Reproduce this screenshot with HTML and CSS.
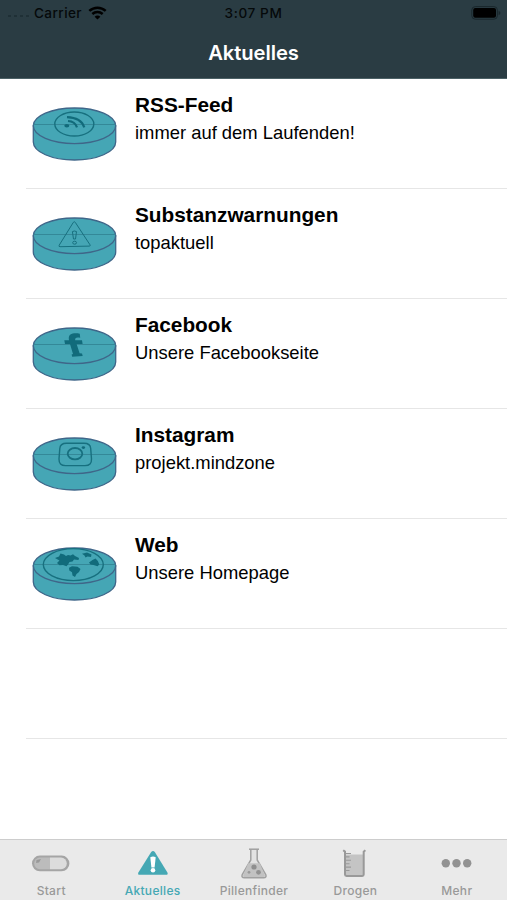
FILE: index.html
```
<!DOCTYPE html>
<html lang="de">
<head>
    <meta charset="UTF-8">
    <meta name="viewport" content="width=device-width, initial-scale=1.0">
    <title>Aktuelles</title>
    <link rel="stylesheet" href="styles.css">
</head>
<body>
    <svg class="defs" width="0" height="0">
        <symbol id="pill" viewBox="0 0 86 56">
            <path class="body" d="M1.3 20V36C1.3 46 19.7 54 42.5 54S83.7 46 83.7 36V20Z"/>
            <ellipse class="body" cx="42.5" cy="19.8" rx="41.2" ry="17.8"/>
            <path class="notch" d="M1.5 18.5H83.5"/>
        </symbol>
    </svg>
    <div id="header">
        <div class="status">
            <div class="carrier">
                <span class="signal"><i></i><i></i><i></i><i></i></span>
                <span>Carrier</span>
                <svg class="wifi" width="19" height="14" viewBox="0 0 19 14">
                    <path d="M1.3 4.9C6 .6 13 .6 17.7 4.9M4.3 8C7.3 5.3 11.7 5.3 14.7 8"/>
                    <path class="dot" d="M9.5 13.6L6.6 10.7C8.2 9.2 10.8 9.2 12.4 10.7Z"/>
                </svg>
            </div>
            <div class="time">3:07 PM</div>
            <div class="power">
                <svg width="30" height="14" viewBox="0 0 30 14">
                    <rect class="case" x=".8" y=".6" width="25.6" height="12.6" rx="3.5"/>
                    <rect x="2.2" y="2" width="22.8" height="9.8" rx="2"/>
                    <path class="tip" d="M27.6 4.7Q29.4 5.4 29.4 7T27.6 9.3Z"/>
                </svg>
            </div>
        </div>
        <h1>Aktuelles</h1>
    </div>
    <div id="list">
        <div class="row">
            <svg class="icon" viewBox="0 0 86 56">
                <use href="#pill"/>
                <ellipse class="line" cx="42.3" cy="18" rx="19.5" ry="12"/>
                <ellipse class="fill" cx="34.8" cy="19.7" rx="2.5" ry="1.8"/>
                <path class="wave" d="M36 15Q43 15.3 45 21.4M35 11.2Q49 11.7 52.3 21.4"/>
            </svg>
            <div class="text">
                <h2>RSS-Feed</h2>
                <p>immer auf dem Laufenden!</p>
            </div>
        </div>
        <div class="row">
            <svg class="icon" viewBox="0 0 86 56">
                <use href="#pill"/>
                <path class="line thin" d="M41.3 6.4Q42.3 5 43.3 6.4L58 28.8Q58.8 30 57.3 30.1L28 30.7Q26.4 30.7 27.2 29.2Z"/>
                <path class="line thin" d="M40.4 15.6Q42.4 14.4 44.5 15.6L43.5 23H41.5Z"/>
                <ellipse class="line thin" cx="42.6" cy="26.7" rx="1.9" ry="1.5"/>
            </svg>
            <div class="text">
                <h2>Substanzwarnungen</h2>
                <p>topaktuell</p>
            </div>
        </div>
        <div class="row">
            <svg class="icon" viewBox="0 0 86 56">
                <use href="#pill"/>
                <path class="fill" d="M47.8 7.7C40.5 6.6 36.5 8.2 36.8 12.8L37 14.3H32.3L33 18H38L41 28L39.6 28.6L40.2 30.8L50.7 30L50 27.4L47.6 27.2L44.6 18H50.6L50 14.3H43.2C42.8 11.6 44.5 11.1 48.2 11.8Z"/>
            </svg>
            <div class="text">
                <h2>Facebook</h2>
                <p>Unsere Facebookseite</p>
            </div>
        </div>
        <div class="row">
            <svg class="icon" viewBox="0 0 86 56">
                <use href="#pill"/>
                <path class="line" d="M34.5 7.2H52Q58.4 7.2 58.7 12.5L59.5 23Q59.8 29.6 53 29.6H33.5Q26.8 29.6 27 23L27.8 12.5Q28.2 7.2 34.5 7.2Z"/>
                <ellipse class="line bold" cx="43" cy="17.7" rx="7.3" ry="5.7"/>
                <ellipse class="fill" cx="51.4" cy="11.6" rx="1.7" ry="1.4"/>
            </svg>
            <div class="text">
                <h2>Instagram</h2>
                <p>projekt.mindzone</p>
            </div>
        </div>
        <div class="row">
            <svg class="icon" viewBox="0 0 86 56">
                <use href="#pill"/>
                <ellipse class="line" cx="41.3" cy="18.6" rx="30" ry="16"/>
                <path class="fill" d="M23 12L27 10.5L28.5 7.5L32 8.5L34 10L36 9L38.5 9.5L41 8.3L43 10L47 12L46.5 14L42 13.5L40.5 15.5L37.5 16L36 18.5L34.5 20.3L31 19L27.5 19.3L25 17L27.5 14.5Z"/>
                <path class="fill" d="M50 7.7L55 6.5L59.5 8.5L59 11L55.5 10.5L53.5 11.5L52.5 9.5Z"/>
                <path class="fill" d="M57 16.5L60.5 14L63.5 12.6Q66.7 15 67.3 18.6L65.5 20.3L61.5 19L58.5 18.5Z"/>
                <path class="fill" d="M37 21.7L40 20.2L45.5 20.8L48.5 23L47 26L44.5 28L43 31L40.5 29.5L40 26.3L37.3 24.5Z"/>
            </svg>
            <div class="text">
                <h2>Web</h2>
                <p>Unsere Homepage</p>
            </div>
        </div>
        <div class="row"></div>
    </div>
    <div id="tabs">
        <div class="tab">
            <svg width="40" height="32" viewBox="0 0 40 32">
                <rect x="1" y="7.6" width="37.4" height="15.6" rx="7.8" fill="#a5a5a5"/>
                <path d="M19 9.6H9A5.8 5.8 0 0 0 9 21.2H19Z" fill="#bcbcbc"/>
                <path d="M19 9.6H30A5.8 5.8 0 0 1 30 21.2H19Z" fill="#dcdcdc"/>
                <path d="M5.5 12L10 11L8 14.5L5 15Z" fill="#999"/>
            </svg>
            <span>Start</span>
        </div>
        <div class="tab active">
            <svg width="40" height="32" viewBox="0 0 40 32">
                <path d="M18.2 4Q20 1.8 21.8 4L34.4 24.4Q35.4 26.7 33 26.7H6.6Q4.4 26.7 5.4 24.4Z" fill="#45a8b4"/>
                <path d="M17.3 9.2Q20 7.6 22.7 9.2L21.6 19.4H18.4Z" fill="#fff"/>
                <circle cx="20" cy="22.3" r="2.3" fill="#fff"/>
            </svg>
            <span>Aktuelles</span>
        </div>
        <div class="tab">
            <svg width="40" height="32" viewBox="0 0 40 32">
                <path d="M16.8 1.3V12L8.4 26.3Q7 29.8 10.4 29.8H29.6Q33 29.8 31.6 26.3L23.2 12V1.3" fill="#e2e2e2" stroke="#a0a0a0" stroke-width="1.5"/>
                <path d="M14.2 15.2H25.8L30.6 26.4Q31.5 28.9 29.4 28.9H10.6Q8.5 28.9 9.4 26.4Z" fill="#c2c2c2"/>
                <path d="M15 1.2H25" stroke="#a0a0a0" stroke-width="1.5"/>
                <circle cx="20" cy="19" r="2.6" fill="#8e8e8e"/>
                <circle cx="24.5" cy="24.3" r="2.4" fill="#929292"/>
                <circle cx="15" cy="24.3" r="1.4" fill="#999"/>
            </svg>
            <span>Pillenfinder</span>
        </div>
        <div class="tab">
            <svg width="40" height="32" viewBox="0 0 40 32">
                <path d="M10 6.5H29V27H10Z" fill="#c4c4c4"/>
                <path d="M8.2 2.2L10 3.6V26.6Q10 28 11.5 28H27.2Q28.7 28 28.7 26.6V3.6L30.4 2.2" fill="none" stroke="#999" stroke-width="2"/>
                <path d="M11 5.5H16M11 8.9H14.5M11 12.3H16M11 15.7H14.5M11 19.1H16M11 22.5H14.5" stroke="#999" stroke-width="1.1"/>
            </svg>
            <span>Drogen</span>
        </div>
        <div class="tab">
            <svg width="40" height="32" viewBox="0 0 40 32">
                <g fill="#929292">
                    <circle cx="8.8" cy="15.3" r="4.2"/>
                    <circle cx="19.5" cy="15.3" r="4.2"/>
                    <circle cx="30.2" cy="15.3" r="4.2"/>
                </g>
            </svg>
            <span>Mehr</span>
        </div>
    </div>
</body>
</html>
```
FILE: styles.css
```
body {
    margin: 0;
    display: flex;
    flex-direction: column;
    height: 100vh;
    overflow: hidden;
    background-color: #fff;
    color: #000;
    font-family: "Liberation Sans", Arial, sans-serif;
}
h1, h2, p {
    margin: 0;
}
.defs {
    display: none;
}
#header {
    height: 79px;
    box-sizing: border-box;
    background-color: #2a3c43;
    border-bottom: 1px solid #4c6166;
    font-family: Inter, sans-serif;
}
.status {
    display: grid;
    grid-template-columns: 1fr auto 1fr;
    align-items: center;
    height: 26px;
    font-size: 13.6px;
    font-weight: 500;
    color: #05090a;
}
.carrier {
    display: flex;
    align-items: center;
    padding-left: 8px;
    letter-spacing: 0.4px;
}
.signal {
    display: flex;
    gap: 3px;
    width: 26px;
    padding-top: 6px;
}
.signal i {
    width: 3px;
    height: 2px;
    background-color: #1f3036;
}
.wifi {
    margin-left: 6px;
    fill: none;
    stroke: #000;
    stroke-width: 2.5;
}
.wifi .dot {
    fill: #000;
    stroke: none;
}
.time {
    letter-spacing: 0.6px;
}
.power {
    display: flex;
    justify-content: flex-end;
    padding-right: 6px;
}
.power .case {
    fill: none;
    stroke: #19272c;
}
.power .tip {
    fill: #19272c;
}
#header h1 {
    height: 52px;
    line-height: 53px;
    text-align: center;
    font-size: 20.2px;
    font-weight: 600;
    letter-spacing: -0.05px;
    color: #fff;
}
#list {
    flex-grow: 1;
}
.row {
    display: flex;
    height: 110px;
    box-sizing: border-box;
    margin-left: 26px;
    border-bottom: 1px solid #e6e6e6;
}
.icon {
    width: 86px;
    height: 56px;
    margin: 27px 17px 0 6px;
}
.body {
    fill: #45a6b5;
    stroke: #3f6689;
    stroke-width: 1.3;
}
.notch {
    stroke: #348898;
    stroke-width: 1;
}
.line {
    fill: none;
    stroke: #17707f;
    stroke-width: 1.4;
}
.thin {
    stroke-width: 1;
}
.bold {
    stroke-width: 1.8;
}
.fill {
    fill: #116b7b;
}
.wave {
    fill: none;
    stroke: #116b7b;
    stroke-width: 2.2;
}
.text {
    padding-top: 13px;
}
.text h2 {
    font-size: 20.8px;
    line-height: 26px;
}
.text p {
    padding-top: 3px;
    font-size: 18.4px;
    line-height: 24px;
}
#tabs {
    display: grid;
    grid-template-columns: repeat(5, 1fr);
    height: 61px;
    box-sizing: border-box;
    background-color: #eaeaea;
    border-top: 1px solid #cdcdcd;
    font-family: Inter, sans-serif;
    font-size: 12px;
    font-weight: 500;
    letter-spacing: 0.3px;
    color: #999;
}
.tab {
    display: flex;
    flex-direction: column;
    align-items: center;
    padding: 8px 0 0 1px;
}
.tab span {
    line-height: 16px;
    margin-top: 3px;
}
.active {
    color: #45a8b4;
}
```
